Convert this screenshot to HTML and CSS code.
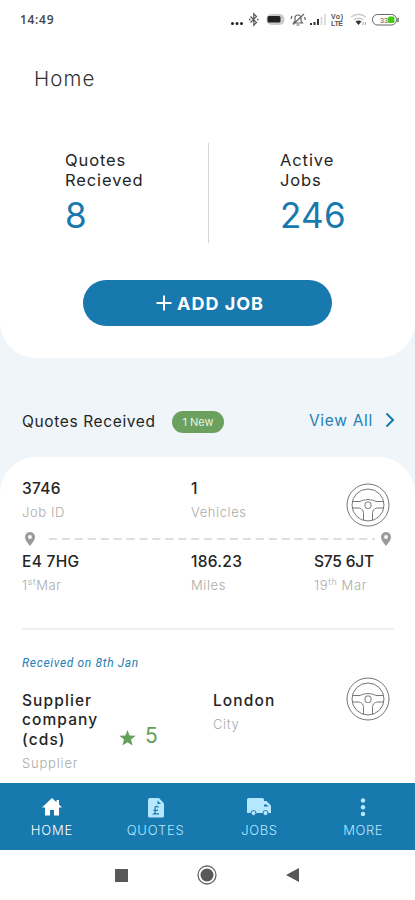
FILE: index.html
```html
<!DOCTYPE html>
<html lang="en">
<head>
<meta charset="utf-8">
<title>Home</title>
<link rel="stylesheet" href="styles.css">
</head>
<body>
<svg width="0" height="0" class="defs" aria-hidden="true">
  <symbol id="wheel" viewBox="0 0 44 44">
    <g fill="none" stroke="#73777b" stroke-width="1">
      <circle cx="22" cy="22" r="21"/><circle cx="22" cy="22" r="16"/>
      <path d="M6.500 18.500H14C18 16 26 16 30 18.500H37.500M6.500 25H12C16 25 18 28 17.500 32V37M37.500 25H32C28 25 26 28 26.500 32V37"/>
      <rect x="19" y="19" width="6" height="6.500" rx="2.300"/>
    </g>
  </symbol>
  <symbol id="pin" viewBox="0 0 10 14">
    <path fill="#9b9b9b" fill-rule="evenodd" d="M5 0a5 5 0 0 0-5 5c0 3.600 5 9 5 9s5-5.400 5-9a5 5 0 0 0-5-5zm0 3.100a1.900 1.900 0 1 1 0 3.800 1.900 1.900 0 0 1 0-3.800z"/>
  </symbol>
</svg>
<div class="phone">
  <section class="hero">
    <div class="status">
      <span class="clock">14:49</span>
      <svg width="172" height="16" viewBox="0 0 172 16">
        <g fill="#222"><circle cx="2.500" cy="11.500" r="1.500"/><circle cx="7" cy="11.500" r="1.500"/><circle cx="11.500" cy="11.500" r="1.500"/></g>
        <path d="M20.500 4.500l6 6-2.700 2.700V1.800l2.700 2.700-6 6" fill="none" stroke="#555" stroke-width="1.200"/><path d="M19 7.500h1.500M27 7.500h1.500" stroke="#555" stroke-width="1.500"/>
        <rect x="36.500" y="2" width="18" height="11" rx="5" fill="#ccc"/><rect x="37.500" y="4" width="13" height="6.500" rx="1.500" fill="#222"/>
        <path d="M63.500 11h9l-1.500-2V6a3 3 0 0 0-6 0v3zM66.500 13h3M74 2L63 12.500M62 4l-1 3M74.500 5l1 3" fill="none" stroke="#666" stroke-width="1.200"/>
        <path d="M81 13v-2M84.500 13v-3M88 13V7" stroke="#333" stroke-width="2"/><path d="M91.500 13V5M95 13V2" stroke="#ddd" stroke-width="2"/>
        <text x="101" y="7" class="lte" textLength="12">Vo)</text><text x="101" y="13.500" class="lte" textLength="12">LTE</text>
        <path d="M121 5q7.500-5.500 15 0M123.500 8q5-3.500 10 0" fill="none" stroke="#ccc" stroke-width="1.500"/><path d="M125.500 9.500q3-2 6 0l-3 3.500z" fill="#333"/><path d="M133 10v3M135.500 10v3" stroke="#aaa"/>
        <rect x="142.500" y="2.500" width="24" height="10.500" rx="5" fill="#fff" stroke="#666"/><path d="M168 6v4" stroke="#666" stroke-width="1.500"/>
        <text x="150" y="10.500" class="lvl">33</text><rect x="158" y="4.500" width="6.500" height="6.500" rx="1.500" fill="#43c916"/>
      </svg>
    </div>
    <h1>Home</h1>
    <div class="stats">
      <div class="stat stat-left"><p class="label">Quotes<br>Recieved</p><p class="num">8</p></div>
      <div class="stat"><p class="label">Active<br>Jobs</p><p class="num">246</p></div>
    </div>
    <button class="add"><svg width="16" height="16" viewBox="0 0 16 16"><path d="M8 .5v15M.5 8h15" stroke="#fff" stroke-width="2"/></svg><span>ADD JOB</span></button>
  </section>

  <div class="section-head">
    <h2>Quotes Received</h2><span class="badge">1 New</span>
    <a class="view"><span>View All</span><svg width="10" height="16" viewBox="0 0 10 16"><path d="M1.500 1.500L8 8l-6.500 6.500" fill="none" stroke="#1779ae" stroke-width="2"/></svg></a>
  </div>

  <section class="card">
    <div class="job">
      <div><p class="val">3746</p><p class="sub">Job ID</p></div>
      <div><p class="val">1</p><p class="sub">Vehicles</p></div>
      <svg class="wheel" width="44" height="44"><use href="#wheel"/></svg>
    </div>
    <div class="route">
      <svg width="10" height="14"><use href="#pin"/></svg>
      <svg class="dash" height="2" width="326"><path d="M0 1h326" stroke="#dedede" stroke-width="2" stroke-dasharray="8 4.930"/></svg>
      <svg width="10" height="14"><use href="#pin"/></svg>
    </div>
    <div class="places">
      <div><p class="val">E4 7HG</p><p class="sub">1<sup>st</sup>Mar</p></div>
      <div><p class="val">186.23</p><p class="sub">Miles</p></div>
      <div><p class="val tight">S75 6JT</p><p class="sub">19<sup>th</sup> Mar</p></div>
    </div>
    <hr>
    <p class="received">Received on 8th Jan</p>
    <div class="supplier">
      <div><p class="val wide">Supplier<br>company<br>(cds)</p><p class="sub wide">Supplier</p></div>
      <div class="rating"><svg width="17" height="16" viewBox="0 0 17 16"><path fill="#64a05b" d="M8.500 0l2.100 5.500 6.100.3-4.700 3.800 1.600 5.900-5.100-3.300-5.100 3.300L5 9.600.3 5.800l6.100-.3z"/></svg><span>5</span></div>
      <div><p class="val wide">London</p><p class="sub">City</p></div>
      <svg class="wheel" width="44" height="44"><use href="#wheel"/></svg>
    </div>
  </section>

  <nav class="tabs">
    <a class="tab on"><svg width="20" height="18" viewBox="0 0 20 18"><path fill="currentColor" d="M10 0L0 9.500h3V17.500h5v-5.500h4v5.500h5V9.500h3l-3-2.900V2h-2.500v2.200z"/></svg><span>HOME</span></a>
    <a class="tab quotes"><svg width="16" height="20" viewBox="0 0 16 20"><path fill="currentColor" d="M2 0h9l5 5.500V18a1.500 1.500 0 0 1-1.500 1.500h-13A1.500 1.500 0 0 1 0 18V2a2 2 0 0 1 2-2z"/><path d="M9.500 2.500L13 6H9.500z" fill="#1779ae"/><path d="M10.500 9.500c-1-2-4-1.400-3.500 1l.3 2c.2 1.500-.3 2.700-1.300 3.300h5M5.500 12.300H10" fill="none" stroke="#1779ae" stroke-width="1.200"/></svg><span>QUOTES</span></a>
    <a class="tab"><svg width="24" height="18" viewBox="0 0 24 18"><path fill="currentColor" d="M1.500 0h14A1.500 1.500 0 0 1 17 1.500V3h2.500L23 6.500c1 1 1 2 1 3V15h-2.500a3 3 0 0 1-5.800 0h-6a3 3 0 0 1-5.800 0H0V1.500A1.500 1.500 0 0 1 1.500 0z"/><path d="M17 6.500h2.500L21.500 8.500H17z" fill="#1779ae"/><g fill="#b5e8ff" stroke="#1779ae"><circle cx="6.500" cy="15" r="2.500"/><circle cx="18.500" cy="15" r="2.500"/></g></svg><span>JOBS</span></a>
    <a class="tab"><svg width="6" height="19" viewBox="0 0 6 19"><g fill="currentColor"><circle cx="3" cy="2.500" r="2.200"/><circle cx="3" cy="9.200" r="2.200"/><circle cx="3" cy="16" r="2.200"/></g></svg><span>MORE</span></a>
  </nav>
  <div class="sysnav">
    <svg width="13" height="13"><rect width="13" height="13" fill="#585858"/></svg>
    <svg width="20" height="20"><circle cx="10" cy="10" r="9" fill="none" stroke="#666" stroke-width="1.300"/><circle cx="10" cy="10" r="6.500" fill="#585858"/></svg>
    <svg width="13" height="14"><path d="M13 0v14L0 7z" fill="#585858"/></svg>
  </div>
</div>
</body>
</html>
```
FILE: styles.css
```css
* { box-sizing: border-box; margin: 0; padding: 0; }
body { background: #fff; font-family: Inter, "Liberation Sans", sans-serif; color: #252525; }
svg { display: block; flex: none; }
.defs { position: absolute; }
.phone { width: 415px; height: 900px; display: flex; flex-direction: column; overflow: hidden; background: #eff5f9; }

.hero { height: 358px; background: #fff; border-radius: 0 0 36px 36px; flex: none; }
.status { height: 38px; padding: 1px 13px 0 20px; display: flex; justify-content: space-between; align-items: center; }
.clock { font: 600 12px/14px "Open Sans", sans-serif; letter-spacing: .7px; color: #444; }
.lte { font: 700 7px "Liberation Sans", sans-serif; fill: #555; }
.lvl { font: 7px "Liberation Sans", sans-serif; fill: #555; }
h1 { font-weight: 300; font-size: 20.5px; line-height: 24px; letter-spacing: 1.1px; padding: 29px 0 0 34px; height: 105px; color: #333; }
.stats { display: flex; height: 100px; }
.stat { padding: 7px 0 0 71px; }
.stat-left { width: 209px; padding-left: 65px; border-right: 1px solid #d5d5d5; }
.label { font-size: 16.5px; line-height: 20px; letter-spacing: .9px; }
.num { font-size: 35px; line-height: 44px; margin-top: 3px; color: #1779ae; letter-spacing: .3px; }
.add { width: 249px; height: 46px; margin: 37px 0 0 83px; border: 0; border-radius: 23px; background: #1779ae; color: #fff; display: flex; align-items: center; justify-content: center; gap: 5px; padding-left: 5px; font: 700 18px/22px Inter, sans-serif; letter-spacing: 1px; }
.add span { padding-top: 1px; }

.section-head { height: 99px; flex: none; display: flex; padding: 52px 20px 0 22px; }
h2 { font-size: 15.5px; font-weight: 400; line-height: 24px; letter-spacing: .63px; width: 150px; white-space: nowrap; }
.badge { width: 52px; height: 22px; margin-top: 1px; border-radius: 11px; background: #6ba05f; color: #e4f3e0; font-size: 11px; line-height: 22px; text-align: center; }
.view { margin-left: auto; height: 20px; display: flex; align-items: center; gap: 12px; color: #2580b5; font-size: 15.5px; letter-spacing: .7px; }

.card { height: 326px; flex: none; background: #fff; border-radius: 36px 36px 0 0; padding: 22px 20px 0 22px; }
.job, .places { display: grid; grid-template-columns: 169px 123px 1fr; }
.job { height: 53px; }
.val { font-size: 15.5px; line-height: 20px; font-weight: 450; letter-spacing: .3px; white-space: nowrap; }
.sub { font-size: 13px; line-height: 18px; margin-top: 4px; font-weight: 300; color: #aaa; letter-spacing: .6px; white-space: nowrap; }
sup { font-size: 9px; line-height: 0; vertical-align: 5px; }
.val.tight { letter-spacing: -.2px; }
.val.wide { letter-spacing: 1.1px; }
.sub.wide { letter-spacing: .8px; }
.job .wheel { margin: 4px 0 0 32px; }
.route { height: 14px; display: flex; align-items: center; padding-left: 3px; }
.dash { margin: 0 6px 0 14px; }
.places { padding-top: 6px; height: 82px; }
hr { border: 0; height: 2px; background: #f0f0f0; width: 372px; }
.received { margin-top: 23px; font: italic 400 12px/20px Roboto, sans-serif; letter-spacing: .65px; color: #2580b5; }
.supplier { display: grid; grid-template-columns: 97px 94px 133px 1fr; padding-top: 18px; }
.supplier .val { line-height: 19.300px; }
.supplier .sub { margin-top: 5px; }
.rating { display: flex; height: 24px; margin-top: 32px; align-items: center; gap: 9px; color: #64a05b; font-size: 21px; }
.rating svg { margin-top: 6px; }
.supplier .wheel { margin-top: -14px; }

.tabs { height: 67px; flex: none; background: #1779ae; display: grid; grid-template-columns: repeat(4, 1fr); }
.tab { display: flex; flex-direction: column; align-items: center; justify-content: space-between; padding: 15px 0 11px; height: 67px; color: #b5e8ff; font-weight: 300; font-size: 13px; line-height: 17px; letter-spacing: .6px; }
.quotes { letter-spacing: .8px; }
.on { color: #fff; letter-spacing: .8px; }
.sysnav { height: 50px; flex: none; background: #fff; display: flex; align-items: center; justify-content: space-between; padding: 0 116px 0 115px; }
```
